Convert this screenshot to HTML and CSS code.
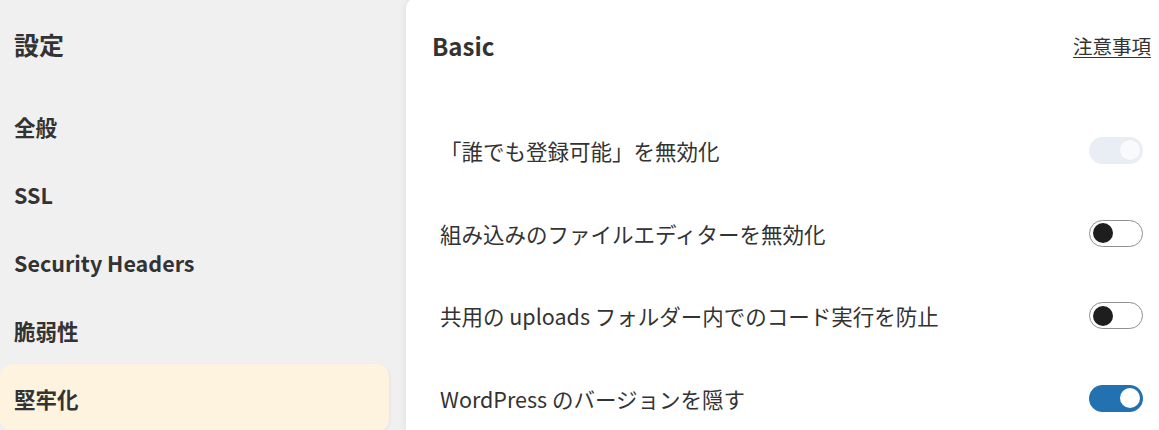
FILE: index.html
```html
<!DOCTYPE html>
<html lang="ja">
<head>
<meta charset="utf-8">
<title>設定</title>
<link rel="stylesheet" href="styles.css">
</head>
<body>
<div class="layout">
  <nav class="sidebar">
    <div class="side-title">設定</div>
    <div class="side-item">全般</div>
    <div class="side-item">SSL</div>
    <div class="side-item">Security Headers</div>
    <div class="side-item">脆弱性</div>
    <div class="side-item active">堅牢化</div>
  </nav>
  <main class="card">
    <div class="card-head">
      <h2 class="card-title">Basic</h2>
      <a class="notice-link" href="#">注意事項</a>
    </div>
    <div class="rows">
      <div class="row">
        <span class="label">「誰でも登録可能」を無効化</span>
        <span class="toggle disabled"><span class="knob"></span></span>
      </div>
      <div class="row">
        <span class="label">組み込みのファイルエディターを無効化</span>
        <span class="toggle off"><span class="knob"></span></span>
      </div>
      <div class="row">
        <span class="label">共用の uploads フォルダー内でのコード実行を防止</span>
        <span class="toggle off"><span class="knob"></span></span>
      </div>
      <div class="row">
        <span class="label">WordPress のバージョンを隠す</span>
        <span class="toggle on"><span class="knob"></span></span>
      </div>
    </div>
  </main>
</div>
</body>
</html>
```

FILE: styles.css
```css
html, body {
  margin: 0;
  padding: 0;
  height: 100%;
  overflow: hidden;
}
body {
  background: #f0f0f0;
  font-family: "Noto Sans CJK JP", "Noto Sans", sans-serif;
  color: #333;
}
.layout {
  display: flex;
  height: 100%;
}
.sidebar {
  width: 389px;
  padding-right: 17px;
  flex: none;
}
.side-title {
  height: 88px;
  margin-bottom: 4px;
  display: flex;
  align-items: center;
  padding-left: 14px;
  font-size: 25px;
  font-weight: 700;
  color: #333;
}
.side-item {
  height: 68px;
  display: flex;
  align-items: center;
  padding-left: 14px;
  font-size: 21.5px;
  font-weight: 700;
  color: #333;
  border-radius: 12px;
}
.side-item.active {
  background: #fdf3df;
  box-shadow: 1px 1px 3px rgba(0, 0, 0, 0.06);
}
.card {
  flex: 1;
  margin-top: -3px;
  background: #fff;
  border-top-left-radius: 12px;
  box-shadow: 0 0 8px rgba(0, 0, 0, 0.08);
  padding: 0 8px 0 26px;
}
.card-head {
  height: 96px;
  display: flex;
  align-items: center;
  justify-content: space-between;
}
.card-title {
  margin: 0;
  font-size: 24px;
  font-weight: 600;
  color: #333;
}
.notice-link {
  font-size: 19.5px;
  color: #333;
  text-decoration: underline;
  text-underline-offset: 3px;
}
.rows {
  padding: 16px 8px 0 8px;
}
.row {
  height: 82.7px;
  display: flex;
  align-items: center;
  justify-content: space-between;
}
.label {
  font-size: 21.5px;
  color: #333;
}
.toggle {
  width: 54px;
  height: 27px;
  box-sizing: border-box;
  border-radius: 14px;
  display: flex;
  align-items: center;
  padding: 0 3px;
}
.knob {
  width: 20px;
  height: 20px;
  border-radius: 50%;
}
.toggle.disabled {
  background: #e9eef5;
  justify-content: flex-end;
}
.toggle.disabled .knob {
  background: #f9fafc;
}
.toggle.off {
  background: #fff;
  border: 1px solid #8c8f94;
  justify-content: flex-start;
}
.toggle.off .knob {
  background: #1e1e1e;
}
.toggle.on {
  background: #2271b1;
  justify-content: flex-end;
}
.toggle.on .knob {
  background: #fff;
}
```
